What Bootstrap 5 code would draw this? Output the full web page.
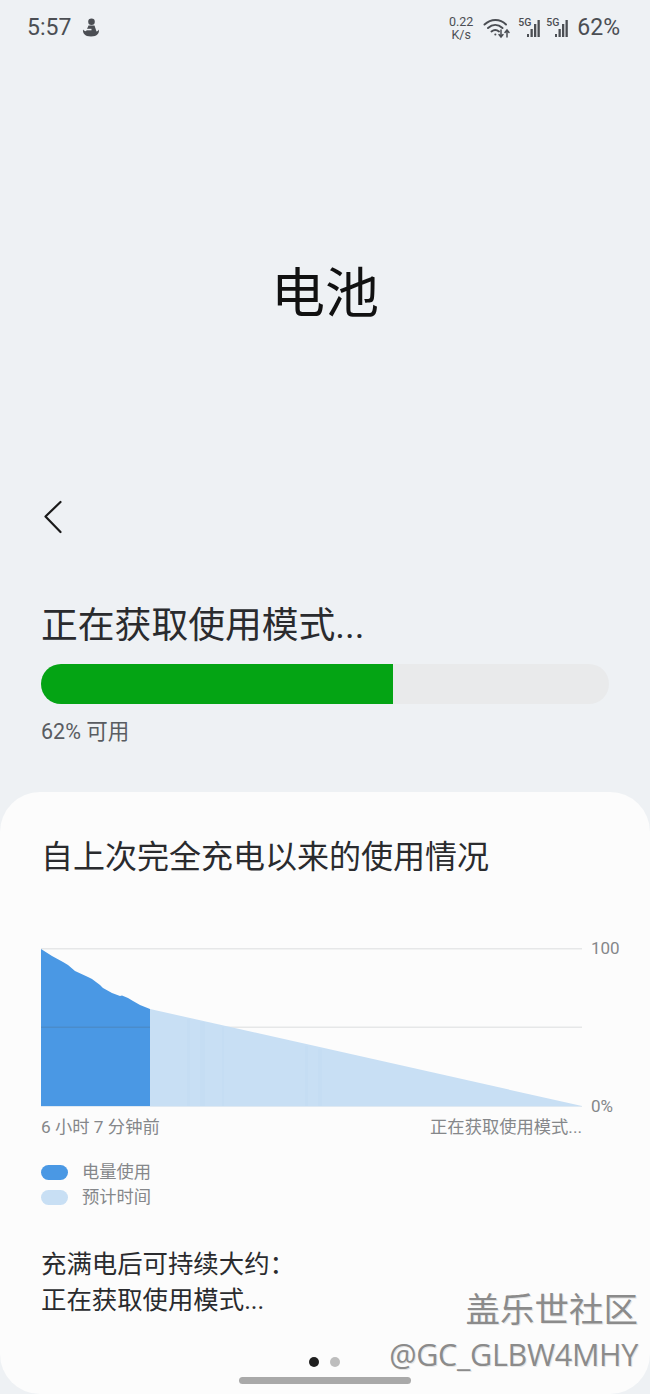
<!DOCTYPE html>
<html lang="zh-CN">
<head>
    <meta charset="UTF-8">
    <meta name="viewport" content="width=device-width, initial-scale=1.0">
    <title>电池</title>
    <link href="https://cdn.jsdelivr.net/npm/bootstrap@5.3.2/dist/css/bootstrap.min.css" rel="stylesheet">
    <style>
        html, body {
            height: 1394px;
            overflow: hidden;
        }
        body {
            background-color: #eef1f4;
            color: #2a2b2e;
            font-family: Roboto, "Noto Sans CJK SC", sans-serif;
        }
        .screen {
            height: 1394px;
        }
        /* status bar */
        .status-bar {
            height: 56px;
            padding: 0 30px 0 27px;
            color: #4b4e53;
        }
        .status-time {
            font-size: 23px;
            margin-right: 11px;
        }
        .status-speed {
            font-size: 12.5px;
            text-align: center;
            margin-right: 10px;
        }
        .status-speed span {
            display: block;
            height: 13px;
            line-height: 13px;
        }
        .wifi-icon {
            margin-right: 2px;
        }
        .status-battery {
            font-size: 23px;
            margin-left: 8px;
        }
        .sim-wrap {
            position: relative;
            width: 28px;
            height: 22px;
        }
        .sim-label {
            position: absolute;
            left: 5px;
            top: 1px;
            font-size: 10.5px;
            line-height: 10px;
            font-weight: 500;
        }
        /* page head */
        .page-title {
            font-size: 54px;
            line-height: 60px;
            margin: 209px 0 175px;
            font-weight: 400;
            color: #111;
        }
        .back-row {
            height: 34px;
            padding-left: 44px;
        }
        .usage-head {
            font-size: 36.8px;
            line-height: 48px;
            margin: 68px 0 14px 41px;
            font-weight: 400;
        }
        .battery-track {
            height: 40px;
            margin: 0 41px;
            border-radius: 20px;
            background-color: #e9eaeb;
        }
        .battery-fill {
            background-color: #04a414;
        }
        .battery-note {
            font-size: 21.5px;
            line-height: 28px;
            margin: 14px 0 46px 41px;
            color: #595c61;
        }
        /* lower sheet */
        .usage-sheet {
            height: 602px;
            background-color: #fcfcfc;
            border-radius: 40px;
            padding: 44px 0 0 41px;
            position: relative;
        }
        .sheet-title {
            font-size: 32px;
            line-height: 42px;
            margin: 0 0 70px 0;
            font-weight: 400;
        }
        .chart-row {
            height: 160px;
        }
        .chart-y {
            width: 40px;
            margin-left: 9px;
            font-size: 17px;
            line-height: 20px;
            color: #85878a;
            margin-top: -10px;
            height: 178px;
        }
        .chart-x {
            width: 541px;
            font-size: 17.3px;
            line-height: 22px;
            color: #85878a;
            margin-top: 8px;
        }
        .legend-list {
            margin-top: 22px;
            font-size: 17.3px;
            line-height: 25px;
            color: #85878a;
        }
        .legend-pill {
            width: 27px;
            height: 15px;
            border-radius: 8px;
            margin-right: 14px;
        }
        .pill-used { background-color: #4a98e4; }
        .pill-left { background-color: #c8dff4; }
        .full-note {
            margin: 36px 0 0 0;
            font-size: 25.4px;
            line-height: 36px;
        }
        .page-dots {
            position: absolute;
            left: 309px;
            top: 565px;
        }
        .page-dot {
            width: 10px;
            height: 10px;
            border-radius: 50%;
            margin-right: 11px;
            background-color: #bdbdbd;
        }
        .page-dot.on { background-color: #1f1f1f; }
        .nav-handle {
            position: absolute;
            left: 239px;
            top: 585px;
            width: 172px;
            height: 7px;
            border-radius: 4px;
            background-color: #a9a9a9;
        }
        /* forum watermark */
        .watermark {
            position: absolute;
            right: 12px;
            top: 1288px;
            text-align: right;
            color: #8b8b8b;
            text-shadow: 1px 1px 0 #e4e4e4;
        }
        .wm-name {
            font-size: 34.5px;
            line-height: 44px;
        }
        .wm-user {
            font-size: 30.5px;
            line-height: 40px;
            font-family: "Open Sans", "Liberation Sans", sans-serif;
            letter-spacing: -0.3px;
            margin-top: 2px;
            white-space: nowrap;
        }
    </style>
</head>
<body>
<div class="screen position-relative">
    <!-- status bar -->
    <div class="status-bar d-flex align-items-center">
        <span class="status-time">5:57</span>
        <svg width="18" height="20" viewBox="0 0 18 20" fill="#4b4e53">
            <circle cx="9.5" cy="3.800" r="3.300"/>
            <path d="M6.500 7.500h6l2 6c1.200-.3 1.900-1 2.400-2 .6 3.500-1.500 7-7.900 7S.5 15 1 11.500c.8 1 1.700 1.600 3 1.700z"/>
            <path d="M3.500 10.800h6v1.500h-6z" fill="#eef1f4"/>
        </svg>
        <div class="ms-auto d-flex align-items-center">
            <div class="status-speed"><span>0.22</span><span>K/s</span></div>
            <svg class="wifi-icon" width="28" height="22" viewBox="0 0 28 22" fill="none" stroke="#4b4e53" stroke-width="2" stroke-linecap="round">
                <path d="M1.500 7.500C8 1.500 17 1.500 23 7.500"/>
                <path d="M5 11c4.500-4 10-4 14.500 0"/>
                <path d="M8.500 14.500c2.500-2 5-2 7.500 0"/>
                <path d="M12.300 17.500h.1"/>
                <path d="M18 13v7m-2-2.500 2 2.500 2-2.500" stroke-width="1.500"/>
                <path d="M24 20v-7m-2 2.500 2-2.500 2 2.500" stroke-width="1.500"/>
            </svg>
            <div class="sim-wrap">
                <span class="sim-label">5G</span>
                <svg class="d-block" width="28" height="22" viewBox="0 0 28 22" fill="#4b4e53">
                    <rect x="14" y="17" width="2" height="3"/>
                    <rect x="17.500" y="12" width="2.300" height="8"/>
                    <rect x="21" y="7" width="2.300" height="13"/>
                    <rect x="24.500" y="3" width="2.300" height="17"/>
                </svg>
            </div>
            <div class="sim-wrap">
                <span class="sim-label">5G</span>
                <svg class="d-block" width="28" height="22" viewBox="0 0 28 22" fill="#4b4e53">
                    <rect x="14" y="17" width="2" height="3"/>
                    <rect x="17.500" y="12" width="2.300" height="8"/>
                    <rect x="21" y="7" width="2.300" height="13"/>
                    <rect x="24.500" y="3" width="2.300" height="17"/>
                </svg>
            </div>
            <span class="status-battery">62%</span>
        </div>
    </div>

    <h1 class="page-title text-center">电池</h1>

    <div class="back-row">
        <svg class="d-block" width="18" height="34" viewBox="0 0 18 34" fill="none" stroke="#1a1a1a" stroke-width="2.200" stroke-linecap="round" stroke-linejoin="round">
            <path d="M16.500 2 1.500 16.500 16.500 32"/>
        </svg>
    </div>

    <h2 class="usage-head">正在获取使用模式...</h2>
    <div class="progress battery-track">
        <div class="progress-bar battery-fill" style="width: 62%"></div>
    </div>
    <p class="battery-note">62% 可用</p>

    <div class="usage-sheet">
        <h3 class="sheet-title">自上次完全充电以来的使用情况</h3>

        <div class="chart-row d-flex">
            <svg width="541" height="160" viewBox="41 948 541 160">
                <rect x="41" y="948" width="541" height="1.500" fill="#e6e7e8"/>
                <rect x="41" y="1026.500" width="541" height="1.500" fill="#e6e7e8"/>
                <polygon points="150,1009 582,1106 150,1106" fill="#c8dff4"/>
                <g fill="#c5ddf3">
                    <rect x="187" y="1019" width="3" height="87"/>
                    <rect x="200" y="1022" width="5" height="84"/>
                    <rect x="222" y="1027" width="2" height="79"/>
                    <rect x="305" y="1046" width="3" height="60"/>
                    <rect x="318" y="1049" width="4" height="57"/>
                </g>
                <polygon points="41,949 52,956 63,962 68,965 75,971 88,977 92,979 100,985 103,988 112,993 120,996 122,995.500 128,998 133,1001 140,1005 150,1009 150,1106 41,1106" fill="#4a98e4"/>
                <rect x="41" y="1026.500" width="109" height="1.500" fill="#4a8ccb"/>
                <rect x="41" y="1106" width="541" height="1" fill="#dfe9f2"/>
            </svg>
            <div class="chart-y d-flex flex-column justify-content-between">
                <span>100</span>
                <span>0%</span>
            </div>
        </div>
        <div class="chart-x d-flex justify-content-between">
            <span>6 小时 7 分钟前</span>
            <span>正在获取使用模式...</span>
        </div>

        <div class="legend-list">
            <div class="d-flex align-items-center"><span class="legend-pill pill-used"></span>电量使用</div>
            <div class="d-flex align-items-center"><span class="legend-pill pill-left"></span>预计时间</div>
        </div>

        <div class="full-note">充满电后可持续大约：<br>正在获取使用模式...</div>

        <div class="page-dots d-flex">
            <span class="page-dot on"></span>
            <span class="page-dot"></span>
        </div>
        <div class="nav-handle"></div>
    </div>

    <div class="watermark">
        <div class="wm-name">盖乐世社区</div>
        <div class="wm-user">@GC_GLBW4MHY</div>
    </div>
</div>
<script src="https://cdn.jsdelivr.net/npm/bootstrap@5.3.2/dist/js/bootstrap.bundle.min.js"></script>
</body>
</html>
